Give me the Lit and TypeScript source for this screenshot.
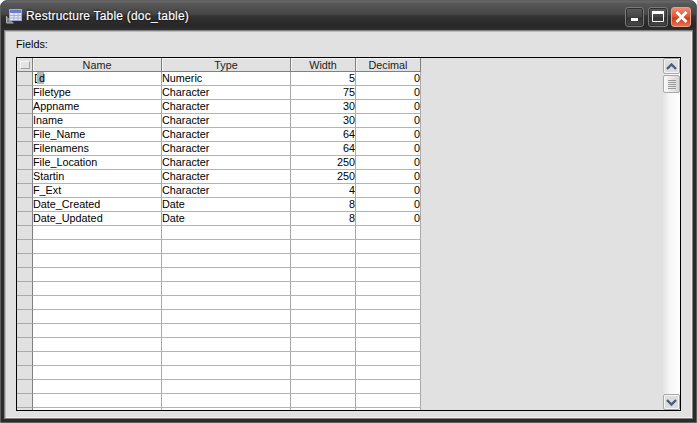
import { LitElement, html, css } from "lit";
import { customElement } from "lit/decorators.js";

const ROWS: [string, string, string, string][] = [
  ["Id", "Numeric", "5", "0"],
  ["Filetype", "Character", "75", "0"],
  ["Appname", "Character", "30", "0"],
  ["Iname", "Character", "30", "0"],
  ["File_Name", "Character", "64", "0"],
  ["Filenamens", "Character", "64", "0"],
  ["File_Location", "Character", "250", "0"],
  ["Startin", "Character", "250", "0"],
  ["F_Ext", "Character", "4", "0"],
  ["Date_Created", "Date", "8", "0"],
  ["Date_Updated", "Date", "8", "0"],
];
const TOTAL = 25;

@customElement("app-root")
export class AppRoot extends LitElement {
  static styles = css`
    :host { display: block; width: 697px; height: 423px; font-family: "Liberation Sans", Arial, sans-serif; font-size: 10.8px; color: #000; overflow: hidden; background: #fff; }
    .win { box-sizing: border-box; width: 697px; height: 423px; background: #2b2b2b; border: 1px solid #5e5e5e; border-radius: 7px 7px 0 0; display: flex; flex-direction: column; overflow: hidden; }
    .title { height: 29px; flex: none; box-sizing: border-box; display: flex; align-items: center; padding: 0 5px 0 5px; gap: 4px;
      background: linear-gradient(#6a6a6a 0, #565656 3px, #474747 13px, #343434 15px, #272727 25px, #303030 29px); }
    .ticon { width: 16px; height: 16px; flex: none; margin-top: 1px; }
    .ttext { flex: 1; color: #fff; font-size: 12px; letter-spacing: 0.2px; text-shadow: 0 0 3px #000, 0 0 1px #000; -webkit-text-stroke: 0.2px #fff; margin-top: 1px; }
    .btns { display: flex; margin-top: 2px; }
    .btn { width: 20px; height: 20px; box-sizing: border-box; border: 1px solid #7a7a7a; border-radius: 3px; margin-left: 3px; background: linear-gradient(#5c5c5c, #444 50%, #333 55%, #484848); box-shadow: inset 0 0 0 1px #303030; display: flex; align-items: center; justify-content: center; }
    .btn.min { width: 19px; margin-left: 0; margin-right: 1px; }
    .btn.close { border-color: #eaa08c; background: linear-gradient(#ee8c72, #e2512f 50%, #cc3a1a 55%, #e87248); box-shadow: none; }
    .body { flex: 1; margin: 0 3px 3px 3px; background: #e1e1e1; border: 1px solid #808080; box-shadow: inset 1px 1px 0 #bcbcbc, inset -1px -1px 0 #f0f0f0; display: flex; flex-direction: column; padding: 8px 11px 7px 11px; min-height: 0; }
    .lab { height: 14px; line-height: 11px; margin-bottom: 4px; }
    .grid { flex: 1; min-height: 0; border: 1px solid #000; display: flex; background: #e1e1e1; }
    .table { flex: 1; overflow: hidden; min-width: 0; }
    .row { display: grid; grid-template-columns: 16px 129px 129px 65px 65px; height: 14px; box-sizing: border-box; width: 404px; }
    .cell { box-sizing: border-box; border-right: 1px solid #a9a9a9; border-bottom: 1px solid #b4b4b4; background: #fff; line-height: 13px; padding: 0; white-space: nowrap; overflow: hidden; }
    .cell.num { text-align: right; }
    .ind { box-sizing: border-box; background: #e1e1e1; border-right: 1px solid #808080; border-bottom: 1px solid #a9a9a9; }
    .hdr .cell { background: #e1e1e1; color: #1c1c1c; text-align: center; border-bottom: 1px solid #808080; border-right: 1px solid #808080; box-shadow: inset 1px 1px 0 #f4f4f4; padding-top: 1px; line-height: 12px; }
    .hdr .ind { border-bottom-color: #808080; display: flex; align-items: center; justify-content: center; }
    .corner { width: 8px; height: 6px; border: 1px solid #a0a0a0; border-top-color: #f8f8f8; border-left-color: #f8f8f8; background: #e4e4e4; }
    .sel { display: inline-block; height: 13px; vertical-align: top; padding-left: 1px; padding-right: 5px;
      background:
        linear-gradient(#000, #000) 2px 2px / 2px 1px no-repeat,
        linear-gradient(#000, #000) 2px 10px / 2px 1px no-repeat,
        linear-gradient(#b4b4b4, #b4b4b4) 4px 0 / 7px 12px no-repeat; }
    .sel i { font-style: normal; margin-right: 2px; }
    .sb { width: 17px; flex: none; display: flex; flex-direction: column; background: linear-gradient(90deg, #e4e4e4, #f6f6f6 40%, #fff); }
    .sb-btn { height: 16px; box-sizing: border-box; border: 1px solid #a8a8a8; border-radius: 2px; background: #dcdde2; box-shadow: inset 0 0 0 1px #f4f4f4; display: flex; align-items: center; justify-content: center; flex: none; }
    .thumb { height: 18px; box-sizing: border-box; border: 1px solid #a8a8a8; border-radius: 2px; background: linear-gradient(90deg, #fafafa, #d6d6d6); display: flex; align-items: center; justify-content: center; margin-top: 1px; flex: none; }
    .track { flex: 1; }
    svg { display: block; }
  `;

  private cells(r: [string, string, string, string], i: number) {
    return html`<div class="row">
      <div class="ind"></div>
      <div class="cell">${i === 0 ? html`<span class="sel"><i>I</i>d</span>` : r[0]}</div>
      <div class="cell">${r[1]}</div>
      <div class="cell num">${r[2]}</div>
      <div class="cell num">${r[3]}</div>
    </div>`;
  }

  render() {
    const blanks = Array.from({ length: TOTAL - ROWS.length }, () => ["", "", "", ""] as [string, string, string, string]);
    return html`<div class="win">
      <div class="title">
        <svg class="ticon" viewBox="0 0 16 16">
          <path d="M0.5 8v7h7" fill="#8a8a8a" stroke="#b0b0b0"/>
          <path d="M1.5 14l5-5" stroke="#555"/>
          <rect x="3.5" y="1.5" width="12" height="11" fill="#e4e6f8" stroke="#a4a8d0"/>
          <rect x="4" y="2" width="11" height="3" fill="#6a7cd0"/>
          <path d="M4 7.5h11M4 10h11M8 5v7M12 5v7" stroke="#a9afd8"/>
        </svg>
        <div class="ttext">Restructure Table (doc_table)</div>
        <div class="btns">
          <div class="btn min"><svg width="10" height="10" viewBox="0 0 10 10"><rect x="1" y="6" width="7" height="3" fill="#fff"/></svg></div>
          <div class="btn"><svg width="12" height="11" viewBox="0 0 12 11"><path d="M.5.5h11v10H.5z" fill="none" stroke="#fff"/><rect x="0" y="0" width="12" height="3" fill="#fff"/></svg></div>
          <div class="btn close"><svg width="13" height="12" viewBox="0 0 13 12"><path d="M1.5 1l10 10M11.5 1l-10 10" stroke="#fff" stroke-width="2.8"/></svg></div>
        </div>
      </div>
      <div class="body">
        <div class="lab">Fields:</div>
        <div class="grid">
          <div class="table">
            <div class="row hdr">
              <div class="ind"><div class="corner"></div></div>
              <div class="cell">Name</div><div class="cell">Type</div><div class="cell">Width</div><div class="cell">Decimal</div>
            </div>
            ${ROWS.map((r, i) => this.cells(r, i))}
            ${blanks.map((r) => this.cells(r, -1))}
          </div>
          <div class="sb">
            <div class="sb-btn"><svg width="11" height="7" viewBox="0 0 11 7"><path d="M1 6l4.5-4.5L10 6" fill="none" stroke="#4d5a78" stroke-width="2.4"/></svg></div>
            <div class="thumb"><svg width="8" height="9" viewBox="0 0 8 9"><path d="M0 .5h8M0 2.5h8M0 4.5h8M0 6.5h8M0 8.5h8" stroke="#9a9a9a"/></svg></div>
            <div class="track"></div>
            <div class="sb-btn"><svg width="11" height="7" viewBox="0 0 11 7"><path d="M1 1l4.5 4.5L10 1" fill="none" stroke="#4d5a78" stroke-width="2.4"/></svg></div>
          </div>
        </div>
      </div>
    </div>`;
  }
}
